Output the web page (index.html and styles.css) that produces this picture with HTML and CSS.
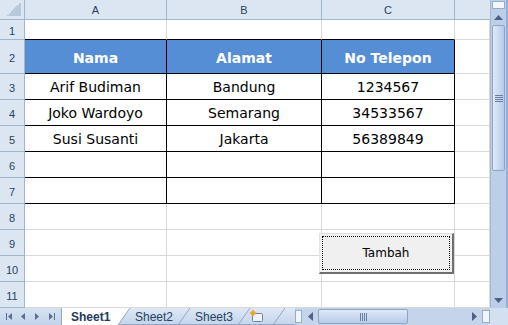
FILE: index.html
```html
<!DOCTYPE html>
<html lang="id">
  <head>
    <meta charset="UTF-8" />
    <title>Book1</title>
    <link rel="stylesheet" href="styles.css">
  </head>
  <body>
    <div class="app">
      <div class="main">
        <div class="sheet">
          <div class="hd corner"><span class="tri"></span></div>
          <div class="hd col">A</div>
          <div class="hd col">B</div>
          <div class="hd col">C</div>
          <div class="hd col last"></div>

          <div class="hd row">1</div>
          <div class="c top"></div>
          <div class="c top"></div>
          <div class="c top"></div>
          <div class="c"></div>

          <div class="hd row">2</div>
          <div class="c t th">Nama</div>
          <div class="c t th">Alamat</div>
          <div class="c t th">No Telepon</div>
          <div class="c"></div>

          <div class="hd row">3</div>
          <div class="c t">Arif Budiman</div>
          <div class="c t">Bandung</div>
          <div class="c t">1234567</div>
          <div class="c"></div>

          <div class="hd row">4</div>
          <div class="c t">Joko Wardoyo</div>
          <div class="c t">Semarang</div>
          <div class="c t">34533567</div>
          <div class="c"></div>

          <div class="hd row">5</div>
          <div class="c t">Susi Susanti</div>
          <div class="c t">Jakarta</div>
          <div class="c t">56389849</div>
          <div class="c"></div>

          <div class="hd row">6</div>
          <div class="c t"></div>
          <div class="c t"></div>
          <div class="c t"></div>
          <div class="c"></div>

          <div class="hd row">7</div>
          <div class="c t"></div>
          <div class="c t"></div>
          <div class="c t"></div>
          <div class="c"></div>

          <div class="hd row">8</div>
          <div class="c"></div>
          <div class="c"></div>
          <div class="c"></div>
          <div class="c"></div>

          <div class="hd row">9</div>
          <div class="c"></div>
          <div class="c"></div>
          <div class="c"></div>
          <div class="c"></div>

          <div class="hd row">10</div>
          <div class="c"></div>
          <div class="c"></div>
          <div class="c"></div>
          <div class="c"></div>

          <div class="hd row">11</div>
          <div class="c"></div>
          <div class="c"></div>
          <div class="c"></div>
          <div class="c"></div>

          <button class="form-btn"><span class="focus">Tambah</span></button>
        </div>

        <div class="vscroll">
          <div class="split-v"></div>
          <div class="sbtn">
            <svg width="9" height="5" viewBox="0 0 9 5"><path d="M0 5 L4.5 0 L9 5 Z" fill="#4d6185"/></svg>
          </div>
          <div class="vthumb">
            <span class="grip-v"></span>
          </div>
          <div class="vtrack"></div>
          <div class="sbtn">
            <svg width="9" height="5" viewBox="0 0 9 5"><path d="M0 0 L4.5 5 L9 0 Z" fill="#4d6185"/></svg>
          </div>
        </div>
      </div>

      <div class="bottom">
        <div class="nav">
          <svg width="62" height="17" viewBox="0 0 62 17">
            <rect x="6" y="5" width="1" height="7" fill="#5a6e8e"/>
            <path d="M12 5 L8 8.5 L12 12 Z" fill="#5a6e8e"/>
            <path d="M25 5 L21 8.5 L25 12 Z" fill="#5a6e8e"/>
            <path d="M35 5 L39 8.5 L35 12 Z" fill="#5a6e8e"/>
            <path d="M49 5 L53 8.5 L49 12 Z" fill="#5a6e8e"/>
            <rect x="54" y="5" width="1" height="7" fill="#5a6e8e"/>
            <rect x="61" y="0" width="1" height="17" fill="#8fa7c9"/>
          </svg>
        </div>
        <div class="tabs">
          <svg width="233" height="17" viewBox="0 0 233 17">
            <defs>
              <linearGradient id="tg" x1="0" y1="0" x2="0" y2="1">
                <stop offset="0" stop-color="#dfe8f5"/>
                <stop offset="1" stop-color="#c3d4eb"/>
              </linearGradient>
            </defs>
            <path d="M176 17 L188 0 L233 0 L233 17 Z" fill="url(#tg)"/>
            <path d="M116 17 L128 0 L188 0 L176 17 Z" fill="url(#tg)"/>
            <path d="M56 17 L68 0 L128 0 L116 17 Z" fill="url(#tg)"/>
            <path d="M0 0 L68 0 L56 17 L0 17 Z" fill="#ffffff"/>
            <path d="M56 17 L68 0" stroke="#8fa7c9" fill="none"/>
            <path d="M116 17 L128 0" stroke="#8fa7c9" fill="none"/>
            <path d="M176 17 L188 0" stroke="#8fa7c9" fill="none"/>
            <path d="M211 17 L223 0" stroke="#8fa7c9" fill="none"/>
            <path d="M56 16.5 L233 16.5" stroke="#8fa7c9" fill="none"/>
            <text x="9" y="13" class="tab-on">Sheet1</text>
            <text x="73" y="13" class="tab-off">Sheet2</text>
            <text x="133" y="13" class="tab-off">Sheet3</text>
            <rect x="190.5" y="5.5" width="10" height="8" rx="1" fill="#eef3fa" stroke="#6c819f"/>
            <circle cx="191" cy="5" r="2.5" fill="#f3b33d"/>
            <path d="M191 1.5 V8.5 M187.5 5 H194.5" stroke="#e89a1c" stroke-width="0.8"/>
          </svg>
        </div>
        <div class="hscroll">
          <div class="split-h"></div>
          <div class="hbtn">
            <svg width="5" height="9" viewBox="0 0 5 9"><path d="M5 0 L0 4.5 L5 9 Z" fill="#4d6185"/></svg>
          </div>
          <div class="hthumb"><span class="grip-h"></span></div>
          <div class="htrack"></div>
          <div class="hbtn">
            <svg width="5" height="9" viewBox="0 0 5 9"><path d="M0 0 L5 4.5 L0 9 Z" fill="#4d6185"/></svg>
          </div>
          <div class="split-r"></div>
        </div>
        <div class="corner-box"></div>
      </div>
    </div>
  </body>
</html>
```

FILE: styles.css
```css
* {
  padding: 0;
  margin: 0;
  box-sizing: border-box;
}
html,
body {
  width: 508px;
  height: 325px;
  overflow: hidden;
  background: #ffffff;
}

.app {
  display: flex;
  flex-direction: column;
  width: 508px;
  height: 325px;
}

.main {
  display: flex;
  height: 308px;
}

/* grid of cells */
.sheet {
  position: relative;
  display: grid;
  grid-template-columns: 25px 142px 155px 133px 35px;
  grid-template-rows: 20px 20px 34px repeat(9, 26px);
  width: 490px;
  overflow: hidden;
}

.hd {
  background: #dce6f2;
  border-right: 1px solid #9eb6ce;
  border-bottom: 1px solid #9eb6ce;
  font-family: "Liberation Sans", Arial, sans-serif;
  font-size: 11px;
  color: #27415f;
  display: flex;
  align-items: center;
  justify-content: center;
}
.hd.col {
  padding-top: 1px;
}
.hd.last {
  border-right: none;
}
.hd.row {
  padding-top: 2px;
}
.corner {
  justify-content: flex-end;
  align-items: flex-end;
  padding: 0 3px 3px 0;
}
.tri {
  width: 14px;
  height: 14px;
  background: linear-gradient(135deg, transparent 50%, #b8c9dc 50%);
}

.c {
  border-right: 1px solid #d9d9d9;
  border-bottom: 1px solid #d9d9d9;
  font-family: "DejaVu Sans", "Comic Sans MS", sans-serif;
  font-size: 14px;
  color: #000000;
  display: flex;
  align-items: center;
  justify-content: center;
  padding-top: 1px;
  white-space: nowrap;
}
.c.top {
  border-bottom-color: #000000;
}
.c.t {
  border-right-color: #000000;
  border-bottom-color: #000000;
}
.c.th {
  background: #558ed5;
  color: #ffffff;
  font-weight: bold;
  padding-top: 2px;
}

/* form button on the sheet */
.form-btn {
  position: absolute;
  left: 319px;
  top: 233px;
  width: 135px;
  height: 41px;
  background: #f0f0f0;
  border-top: 1px solid #e3e3e3;
  border-left: 1px solid #e3e3e3;
  border-right: 2px solid #6f6f6f;
  border-bottom: 2px solid #6f6f6f;
  padding: 2px;
  font-family: "DejaVu Sans", Tahoma, sans-serif;
  font-size: 12px;
  color: #000000;
}
.focus {
  display: flex;
  align-items: center;
  justify-content: center;
  width: 100%;
  height: 100%;
  border: 1px dotted #000000;
}

/* vertical scrollbar */
.vscroll {
  width: 18px;
  display: flex;
  flex-direction: column;
  background: #bccfe9;
  border-left: 1px solid #a3b9d6;
  border-right: 2px solid #8fb0dc;
}
.split-v {
  height: 8px;
  margin: 1px 1px 0;
  background: #f3f7fc;
  border: 1px solid #97acc9;
}
.sbtn {
  height: 16px;
  display: flex;
  align-items: center;
  justify-content: center;
}
.vthumb {
  height: 146px;
  margin: 0 1px;
  border: 1px solid #8ca5c7;
  border-radius: 2px;
  background: linear-gradient(to right, #dfe9f7, #b6cbe8);
  display: flex;
  align-items: center;
  justify-content: center;
}
.grip-v {
  width: 8px;
  height: 7px;
  background: repeating-linear-gradient(to bottom, #6a7f9f 0 1px, transparent 1px 2px);
}
.vtrack {
  flex: 1;
}

/* bottom strip: tabs + horizontal scrollbar */
.bottom {
  display: flex;
  height: 17px;
  background: linear-gradient(#d6e2f2, #c2d3ea);
}
.nav {
  width: 62px;
  height: 17px;
}
.tabs {
  width: 233px;
  height: 17px;
}
.tab-on {
  font-family: "Liberation Sans", Arial, sans-serif;
  font-size: 12px;
  font-weight: bold;
  fill: #1e395b;
}
.tab-off {
  font-family: "Liberation Sans", Arial, sans-serif;
  font-size: 12px;
  fill: #27415f;
}

.hscroll {
  flex: 1;
  display: flex;
  align-items: stretch;
  background: #c3d4eb;
}
.split-h {
  width: 7px;
  margin: 2px 0 2px 0;
  background: #f3f7fc;
  border: 1px solid #97acc9;
}
.hbtn {
  width: 16px;
  display: flex;
  align-items: center;
  justify-content: center;
}
.hthumb {
  width: 90px;
  margin: 1px 0;
  border: 1px solid #8ca5c7;
  border-radius: 2px;
  background: linear-gradient(#dfe9f7, #b6cbe8);
  display: flex;
  align-items: center;
  justify-content: center;
}
.grip-h {
  width: 7px;
  height: 8px;
  background: repeating-linear-gradient(to right, #6a7f9f 0 1px, transparent 1px 2px);
}
.htrack {
  flex: 1;
}
.split-r {
  width: 8px;
  margin: 2px 0;
  background: #f3f7fc;
  border: 1px solid #97acc9;
}
.corner-box {
  width: 18px;
  background: #d3e0f1;
}
```
